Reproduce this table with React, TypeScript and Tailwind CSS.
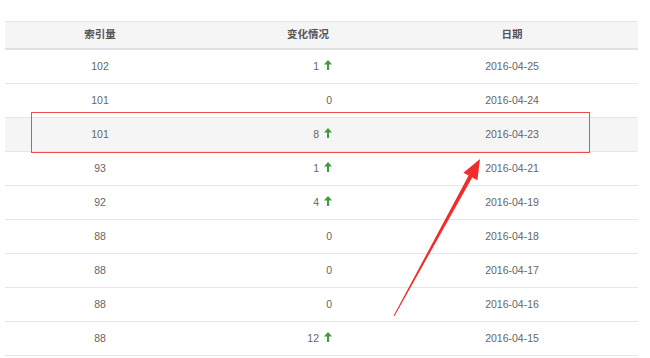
// 收录趋势表：索引量、变化情况、日期。
// 第三行有红框标注，外加一个红色箭头指过去。

type Row = {
  count: number;
  change: number;
  date: string;
};

const rows: Row[] = [
  { count: 102, change: 1, date: "2016-04-25" },
  { count: 101, change: 0, date: "2016-04-24" },
  { count: 101, change: 8, date: "2016-04-23" },
  { count: 93, change: 1, date: "2016-04-21" },
  { count: 92, change: 4, date: "2016-04-19" },
  { count: 88, change: 0, date: "2016-04-18" },
  { count: 88, change: 0, date: "2016-04-17" },
  { count: 88, change: 0, date: "2016-04-16" },
  { count: 88, change: 12, date: "2016-04-15" },
];

function UpArrow() {
  return (
    <svg width="8" height="10" viewBox="0 0 8 10" className="ml-[5px] mb-[4px] shrink-0">
      <polygon points="4,0 8,4.5 5,4.5 5,10 3,10 3,4.5 0,4.5" fill="#3f9a3a" />
    </svg>
  );
}

export default function App() {
  return (
    <div
      className="relative w-[650px] h-[358px] bg-white overflow-hidden text-[10.5px] text-[#666]"
      style={{ fontFamily: '"Liberation Sans", Arial, "Noto Sans CJK SC", sans-serif' }}
    >
      <div className="ml-[5px] mt-[21px] w-[633px]">
        {/* 表头 */}
        <div className="grid grid-cols-[190px_226px_1fr] h-[29px] items-center bg-[#f5f5f5] border-t border-[#e6e6e6] border-b-2 border-b-[#e0e0e0] font-bold text-[#555]">
          <div className="text-center">索引量</div>
          <div className="text-center">变化情况</div>
          <div className="text-center pr-[35px]">日期</div>
        </div>

        {rows.map((r, i) => (
          <div
            key={r.date}
            className={`grid grid-cols-[190px_226px_1fr] h-[34px] items-center border-b border-[#e6e6e6] ${
              i === 2 ? "bg-[#f5f5f5]" : ""
            }`}
          >
            <div className="text-center">{r.count}</div>
            <div className="flex items-center justify-end pr-[89px]">
              <span>{r.change}</span>
              {r.change > 0 && <UpArrow />}
            </div>
            <div className="text-center pr-[35px]">{r.date}</div>
          </div>
        ))}
      </div>

      {/* 标注：红框 */}
      <div className="absolute left-[31px] top-[112px] w-[559px] h-[41px] border-[1.5px] border-[#f04a4a]" />

      {/* 标注：红箭头 */}
      <svg className="absolute left-0 top-0" width="650" height="358" viewBox="0 0 650 358">
        <polygon
          points="393.6,315.8 468.6,175.5 463.4,172.7 480,159 477.4,180.3 472.2,177.5 394.4,316.2"
          fill="#f22b2b"
        />
      </svg>
    </div>
  );
}
